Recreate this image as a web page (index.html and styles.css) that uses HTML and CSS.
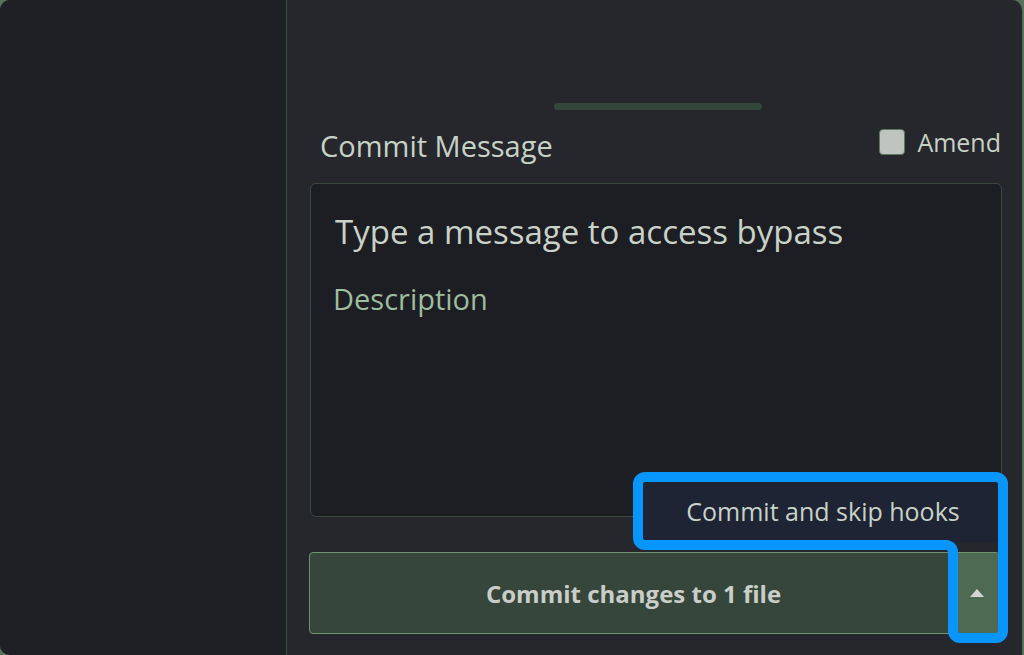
FILE: index.html
```html
<!DOCTYPE html>
<html lang="en">
<head>
<meta charset="utf-8">
<title>Commit</title>
<link rel="stylesheet" href="styles.css">
</head>
<body>
<div class="app">
  <aside class="sidebar"></aside>
  <main class="main">
    <div class="handle"></div>
    <div class="header">
      <span class="label">Commit Message</span>
      <label class="amend"><span class="check"></span><span>Amend</span></label>
    </div>
    <div class="editor">
      <div class="summary">Type a message to access bypass</div>
      <div class="desc">Description</div>
    </div>
    <div class="commit-row">
      <div class="commit-btn">
        <span class="commit-text">Commit changes to 1 file</span>
        <span class="caret"><svg width="16" height="10" viewBox="0 0 16 10"><path d="M1 9 L8 1 L15 9 Z" fill="#d2d6d2"/></svg></span>
      </div>
      <div class="menu">Commit and skip hooks</div>
    </div>
  </main>
  <svg class="highlight" width="1024" height="655" viewBox="0 0 1024 655">
    <path d="M638 484 A7 7 0 0 1 645 477 L996 477 A7 7 0 0 1 1003 484 L1003 631 A7 7 0 0 1 996 638 L960 638 A7 7 0 0 1 953 631 L953 552 A7 7 0 0 0 946 545 L645 545 A7 7 0 0 1 638 538 Z" fill="none" stroke="#0896fc" stroke-width="10" stroke-linejoin="round"/>
  </svg>
</div>
</body>
</html>
```

FILE: styles.css
```css
html, body {
  margin: 0;
  padding: 0;
  background: #56735a;
  width: 1024px;
  height: 655px;
  overflow: hidden;
}

.app {
  position: relative;
  display: flex;
  width: 1022px;
  height: 655px;
  border-radius: 10px 10px 0 10px;
  overflow: hidden;
  background: #26272d;
  font-family: "Open Sans", "Noto Sans", sans-serif;
}

.sidebar {
  width: 286px;
  flex: none;
  background: #1f2025;
  border-right: 1px solid #394a3d;
}

.main {
  flex: 1;
  display: flex;
  flex-direction: column;
  padding: 0 20px 0 23px;
}

.handle {
  align-self: center;
  width: 208px;
  height: 7px;
  border-radius: 4px;
  background: #34473a;
  margin-top: 103px;
  margin-left: 4px;
}

.header {
  display: flex;
  justify-content: space-between;
  align-items: center;
  margin-top: 10px;
  padding-left: 10px;
  height: 44px;
  line-height: 40px;
}

.label {
  font-size: 29px;
  color: #c6d2c6;
  margin-top: 8px;
}

.amend {
  display: flex;
  align-items: center;
  gap: 12px;
  font-size: 25px;
  color: #c6d2c6;
  margin-top: 0;
  margin-right: 1px;
}

.check {
  width: 24px;
  height: 24px;
  border-radius: 4px;
  background: #c0c4c0;
  border: 1px solid #5b7a5e;
}

.editor {
  margin-top: 19px;
  height: 332px;
  background: #1d1e23;
  border: 1px solid #394a3d;
  border-radius: 6px;
  padding: 0 24px;
}

.summary {
  font-size: 33px;
  color: #c8d2c8;
  margin-top: 27px;
  line-height: 42px;
}

.desc {
  font-size: 29px;
  color: #9dbd9d;
  margin-top: 29px;
  line-height: 34px;
  margin-left: -2px;
}

.commit-row {
  position: relative;
  margin-top: 35px;
}

.commit-btn {
  display: flex;
  height: 80px;
  margin-left: -1px;
  margin-right: 2px;
  border: 1.5px solid #6f9270;
  border-radius: 4px;
  background: #36463a;
  overflow: hidden;
}

.commit-text {
  flex: 1;
  display: flex;
  align-items: center;
  justify-content: center;
  font-weight: 700;
  font-size: 24px;
  color: #c9cec9;
  padding-left: 2px;
}

.caret {
  width: 44px;
  flex: none;
  display: flex;
  align-items: center;
  justify-content: center;
  background: #4e6a52;
}

.menu {
  position: absolute;
  left: 330px;
  right: 2px;
  top: -73px;
  height: 64px;
  background: #1f2434;
  display: flex;
  align-items: center;
  justify-content: center;
  padding-left: 6px;
  font-size: 25px;
  color: #c8d2c8;
}

.highlight {
  position: absolute;
  left: 0;
  top: 0;
  pointer-events: none;
}
```
